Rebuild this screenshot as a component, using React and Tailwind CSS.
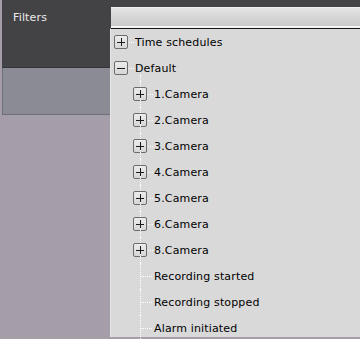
import React from 'react';

const rows = [
  { label: 'Time schedules', level: 0, box: '+' },
  { label: 'Default', level: 0, box: '-' },
  { label: '1.Camera', level: 1, box: '+' },
  { label: '2.Camera', level: 1, box: '+' },
  { label: '3.Camera', level: 1, box: '+' },
  { label: '4.Camera', level: 1, box: '+' },
  { label: '5.Camera', level: 1, box: '+' },
  { label: '6.Camera', level: 1, box: '+' },
  { label: '8.Camera', level: 1, box: '+' },
  { label: 'Recording started', level: 1 },
  { label: 'Recording stopped', level: 1 },
  { label: 'Alarm initiated', level: 1 },
];

function ToggleBox({ sign }) {
  return (
    <div className="w-[14px] h-[14px] shrink-0 rounded-[2px] border border-[#6c6c6c] bg-gradient-to-b from-[#ececec] to-[#d6d6d6] flex items-center justify-center">
      <div className="relative w-[8px] h-[8px]">
        <div className="absolute left-0 top-[3.5px] w-[8px] h-[1px] bg-[#1a1a1a]" />
        {sign === '+' && <div className="absolute top-0 left-[3.5px] w-[1px] h-[8px] bg-[#1a1a1a]" />}
      </div>
    </div>
  );
}

function TreeRow({ row, index }) {
  const isChild = row.level === 1;
  return (
    <div className="relative h-[26px] flex items-center">
      {/* vertical guide under Default */}
      {isChild && (
        <div className="absolute left-[29px] top-0 bottom-0 border-l border-dotted border-white" />
      )}
      {index === 1 && (
        <div className="absolute left-[29px] top-[20px] bottom-0 border-l border-dotted border-white" />
      )}
      {row.box ? (
        <div className={`flex items-center ${isChild ? 'pl-[22px]' : 'pl-[3px]'}`}>
          <ToggleBox sign={row.box} />
          <div className="w-[5px] border-t border-dotted border-white ml-[1px] mr-[1px]" />
        </div>
      ) : (
        <div className="flex items-center pl-[30px]">
          <div className="w-[11px] border-t border-dotted border-white mr-[2px]" />
        </div>
      )}
      <span className="relative text-[11px] tracking-[0.15px] leading-none text-black z-10">{row.label}</span>
    </div>
  );
}

export default function App() {
  return (
    <div className="relative w-[360px] h-[339px] overflow-hidden bg-[#a59ea9] font-['DejaVu_Sans',sans-serif]">
      {/* Filters bar */}
      <div className="ml-[2px] h-[68px] bg-[#434245] border-b border-[#35343a] flex items-start">
        <div className="w-[109px] pl-[11px] pt-[10px] text-[11px] tracking-[0.15px] text-[#ececec]">Filters</div>
        <div className="mt-[7px] flex-1 h-[21px] bg-gradient-to-b from-[#e4e4e4] to-[#c9c9c9] border-t border-[#f0f0f0] border-b-2 border-b-[#f4f4f4]" />
      </div>
      {/* lower panel */}
      <div className="ml-[2px] h-[47px] bg-[#8a8b95] border border-[#6f6e78] border-t-0" />

      {/* dropdown tree */}
      <div className="absolute left-[110px] top-[28px] w-[250px] h-[309px] bg-[#d9d9d9] border-t border-[#161616] border-l border-l-[#e6e6e6]">
        {rows.map((row, i) => (
          <TreeRow key={row.label} row={row} index={i} />
        ))}
      </div>
    </div>
  );
}
